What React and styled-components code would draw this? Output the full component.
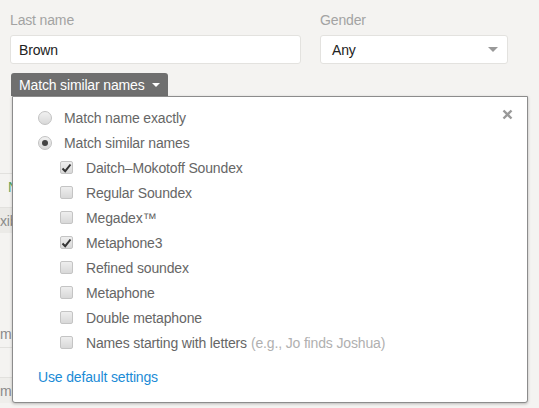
import React from 'react';
import styled, { createGlobalStyle } from 'styled-components';

const GlobalStyle = createGlobalStyle`
  html, body {
    margin: 0;
    padding: 0;
    background: #f4f3f1;
    font-family: "Liberation Sans", Arial, sans-serif;
  }
`;

const Page = styled.div`
  width: 539px;
  height: 408px;
  overflow: hidden;
  position: relative;
  background: #f4f3f1;
  letter-spacing: -0.15px;
`;

const FieldRow = styled.div`
  display: flex;
  gap: 19px;
  padding: 11px 0 0 10px;
`;

const Field = styled.div`
  display: flex;
  flex-direction: column;
  width: ${({ width }) => width};
`;

const Label = styled.label`
  font-size: 14px;
  color: #a3a3a3;
  height: 20px;
  line-height: 18px;
  margin-bottom: 4px;
`;

const TextInput = styled.div`
  box-sizing: border-box;
  height: 29px;
  background: #fff;
  border: 1px solid #e3e2df;
  border-radius: 3px;
  padding: 0 8px;
  display: flex;
  align-items: center;
  font-size: 14px;
  color: #222;
`;

const SelectBox = styled(TextInput)`
  justify-content: space-between;
  padding: 0 9px 0 11px;
`;

const Caret = styled.span`
  width: 0;
  height: 0;
  border-left: ${({ size }) => size}px solid transparent;
  border-right: ${({ size }) => size}px solid transparent;
  border-top: ${({ size }) => size}px solid ${({ color }) => color};
`;

const MatchArea = styled.div`
  position: relative;
  padding: 9px 0 0 11px;
`;

const TabButton = styled.div`
  display: inline-flex;
  align-items: center;
  gap: 7px;
  height: 23px;
  box-sizing: border-box;
  padding: 0 8px;
  background: #6f6f6f;
  color: #fff;
  font-size: 14px;
  border-radius: 3px 3px 0 0;
`;

/* form rows that sit behind the open panel, only their left edge shows */
const Behind = styled.div`
  display: flex;
  flex-direction: column;
  margin-left: -11px;
  width: 14px;
  overflow: hidden;
  font-size: 14px;
`;

const BehindLine = styled.div`
  height: ${({ h }) => h}px;
  box-sizing: border-box;
  border-top: ${({ line }) => (line ? '1px solid #e2e1de' : 'none')};
  background: ${({ bg }) => bg || 'transparent'};
  color: ${({ color }) => color || '#8a8a8a'};
  display: flex;
  align-items: center;
  white-space: nowrap;
  padding-left: ${({ pl }) => pl || 0}px;
`;

const Panel = styled.div`
  position: absolute;
  left: 12px;
  top: 32px;
  width: 516px;
  height: 307px;
  box-sizing: border-box;
  background: #fff;
  border: 1px solid #8c8c8c;
  border-radius: 0 0 3px 3px;
  box-shadow: 0 1px 3px rgba(0, 0, 0, 0.25);
  padding: 8px 0 0 25px;
  display: flex;
  flex-direction: column;
`;

const CloseButton = styled.svg`
  position: absolute;
  top: 12px;
  right: 14px;
`;

const Option = styled.div`
  display: flex;
  align-items: center;
  height: 25px;
  padding-left: ${({ indent }) => indent || 0}px;
  font-size: 14px;
  color: #666;
`;

const Radio = styled.span`
  box-sizing: border-box;
  width: 14px;
  height: 14px;
  border-radius: 50%;
  border: 1px solid #c2c2c2;
  background: linear-gradient(#f1f1f1, #d9d9d9);
  margin-right: 12px;
  display: flex;
  align-items: center;
  justify-content: center;
  &::after {
    content: '';
    display: ${({ checked }) => (checked ? 'block' : 'none')};
    width: 6px;
    height: 6px;
    border-radius: 50%;
    background: #444;
  }
`;

const Box = styled.span`
  box-sizing: border-box;
  width: 13px;
  height: 13px;
  border-radius: 2px;
  border: 1px solid #c4c4c4;
  background: linear-gradient(#eeeeee, #d8d8d8);
  margin-right: 13px;
  display: flex;
  align-items: center;
  justify-content: center;
`;

const Hint = styled.span`
  color: #b0b0b0;
  margin-left: 4px;
`;

const DefaultLink = styled.a`
  margin-top: 14px;
  font-size: 14px;
  color: #1b8bd6;
  text-decoration: none;
  align-self: flex-start;
`;

const CheckMark = () => (
  <svg width="11" height="10" viewBox="0 0 11 10">
    <path d="M1.5 5.5 L4.2 8.2 L9.5 1.5" fill="none" stroke="#333" strokeWidth="2" />
  </svg>
);

const methods = [
  { name: 'Daitch–Mokotoff Soundex', checked: true },
  { name: 'Regular Soundex' },
  { name: 'Megadex™' },
  { name: 'Metaphone3', checked: true },
  { name: 'Refined soundex' },
  { name: 'Metaphone' },
  { name: 'Double metaphone' },
  { name: 'Names starting with letters', hint: '(e.g., Jo finds Joshua)' },
];

const App = () => {
  return (
    <Page>
      <GlobalStyle />
      <FieldRow>
        <Field width="291px">
          <Label>Last name</Label>
          <TextInput>Brown</TextInput>
        </Field>
        <Field width="188px">
          <Label>Gender</Label>
          <SelectBox>
            Any
            <Caret size={5} color="#999" />
          </SelectBox>
        </Field>
      </FieldRow>

      <MatchArea>
        <TabButton>
          Match similar names
          <Caret size={4} color="#fff" />
        </TabButton>

        <Behind>
          <BehindLine h={77} />
          <BehindLine h={26} line pl={8} color="#5aa55a">N</BehindLine>
          <BehindLine h={8} />
          <BehindLine h={26} line bg="#ebeae7">xib</BehindLine>
          <BehindLine h={88} />
          <BehindLine h={26}>mi</BehindLine>
          <BehindLine h={30} line />
          <BehindLine h={26} line bg="#efeeeb">mil</BehindLine>
        </Behind>

        <Panel>
          <CloseButton width="11" height="11" viewBox="0 0 11 11">
            <path d="M1.5 1.5 L9.5 9.5 M9.5 1.5 L1.5 9.5" stroke="#999" strokeWidth="2.4" />
          </CloseButton>
          <Option>
            <Radio />
            Match name exactly
          </Option>
          <Option>
            <Radio checked />
            Match similar names
          </Option>
          {methods.map((m) => (
            <Option key={m.name} indent={22}>
              <Box>{m.checked && <CheckMark />}</Box>
              {m.name}
              {m.hint && <Hint>{m.hint}</Hint>}
            </Option>
          ))}
          <DefaultLink href="#">Use default settings</DefaultLink>
        </Panel>
      </MatchArea>
    </Page>
  );
};

export default App;
